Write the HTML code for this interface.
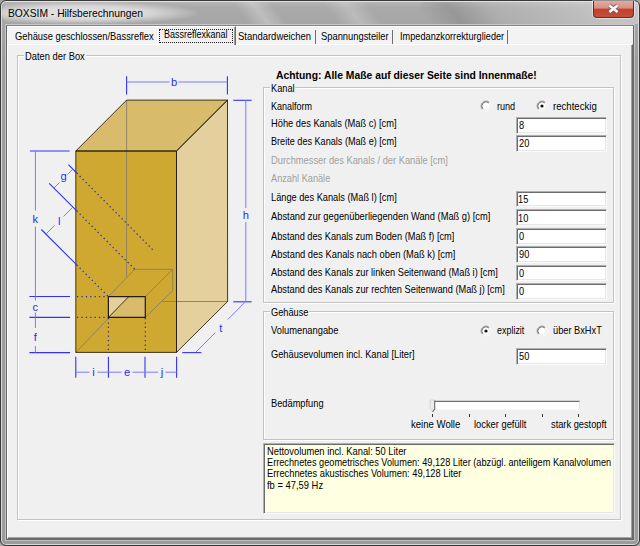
<!DOCTYPE html>
<html lang="de"><head><meta charset="utf-8"><title>BOXSIM - Hilfsberechnungen</title>
<style>
html,body{margin:0;padding:0;}
body{width:640px;height:546px;overflow:hidden;position:relative;background:#a4a4a4;font-family:"Liberation Sans",sans-serif;color:#000;}
.abs,.t,.grp,.inp,.glbl,#frame,#client,#page,#seltab,#focus,#close,#track,#tglow,.streak{position:absolute;box-sizing:border-box;}
.t{white-space:pre;line-height:14px;transform-origin:0 50%;display:block;}
.b{font-weight:bold;}
.title{color:#000;}
#frame{left:0;top:0;width:640px;height:546px;border:1px solid #383838;border-radius:6px;
 background:linear-gradient(180deg,#b6b6b6 0,#a9a9a9 7px,#a6a6a6 24px,#9c9c9c 60px,#9c9c9c 100%);
 box-shadow:inset 0 0 0 1px rgba(255,255,255,.62);}
#tglow{left:2px;top:2px;width:195px;height:22px;border-radius:10px;background:radial-gradient(ellipse at 40% 50%,rgba(255,255,255,.72) 0,rgba(255,255,255,.55) 42%,rgba(255,255,255,0) 74%);}
#streak1{left:225px;top:2px;width:70px;height:22px;background:linear-gradient(52deg,rgba(255,255,255,0) 28%,rgba(255,255,255,.26) 50%,rgba(255,255,255,0) 72%);}
#streak2{left:315px;top:2px;width:75px;height:22px;background:linear-gradient(52deg,rgba(255,255,255,0) 26%,rgba(255,255,255,.22) 50%,rgba(255,255,255,0) 74%);}
#streak3{left:420px;top:2px;width:218px;height:22px;background:linear-gradient(52deg,rgba(0,0,0,0) 4%,rgba(0,0,0,.10) 18%,rgba(255,255,255,.08) 36%,rgba(255,255,255,.20) 62%,rgba(255,255,255,.30) 80%,rgba(255,255,255,.34) 100%);}
#close{left:592.5px;top:0.5px;width:41px;height:17px;border:1px solid #55322c;border-top:none;border-radius:0 0 4px 4px;
 background:linear-gradient(180deg,#e2ab9f 0,#d88f80 45%,#c1402b 50%,#c4503a 100%);box-shadow:0 0 0 1px rgba(255,255,255,.45);}
#close svg{position:absolute;left:13px;top:2px;}
#client{left:6px;top:25px;width:628px;height:515px;background:#f0f0f0;border:1px solid #666;border-top-color:#858585;box-shadow:0 0 0 1px rgba(255,255,255,.38), inset 1px 1px 0 #fbfbfb;}
#page{left:7px;top:44px;width:626px;height:495px;background:#f0f0f0;border-top:1px solid #fff;border-left:1px solid #fff;border-right:1px solid #6b6b6b;border-bottom:1px solid #6b6b6b;box-shadow:inset -1px -1px 0 #a2a2a2;}
#seltab{left:156.5px;top:26px;width:79px;height:19px;background:#f0f0f0;border-left:1px solid #fff;border-top:1px solid #fff;border-right:1px solid #696969;box-shadow:inset -1px 0 0 #a0a0a0;}
#focus{left:159px;top:28.8px;width:74px;height:14px;border:1px dotted #222;}
.grp{border:1px solid #c3c3c3;box-shadow:1px 1px 0 #fff, inset 1px 1px 0 #fff;}
.glbl{background:#f0f0f0;}
.inp{border-top:1px solid #b0b0b0;border-left:1px solid #b0b0b0;border-right:1px solid #fbfbfb;border-bottom:1px solid #fbfbfb;box-shadow:inset 1px 1px 0 #6c6c6c, inset -1px -1px 0 #e6e6e6;}
#track{left:434.2px;top:401px;width:146px;height:9px;background:#fff;border-top:1px solid #6e6e6e;border-left:1px solid #7a7a7a;border-right:1px solid #e8e8e8;border-bottom:1px solid #f6f6f6;box-shadow:0 -1px 0 rgba(120,120,120,.25);}

</style></head>
<body>
<div id="frame"></div>
<div id="tglow"></div>
<div id="streak1" class="streak"></div><div id="streak2" class="streak"></div><div id="streak3" class="streak"></div>
<div id="close"><svg width="14" height="12" viewBox="0 0 14 12"><path d="M2.4 2.5 L10.6 8.9 M10.6 2.5 L2.4 8.9" stroke="#75606a" stroke-width="4.2" stroke-linecap="butt"/><path d="M2.4 2.5 L10.6 8.9 M10.6 2.5 L2.4 8.9" stroke="#fdfdfd" stroke-width="2.5"/></svg></div>
<span class="t title" style="left:7.90px;top:6px;font-size:11.2px;transform:scaleX(0.9190);">BOXSIM - Hilfsberechnungen</span>
<div id="client"></div>
<div class="abs" style="left:8.00px;top:27.00px;width:625.00px;height:17.00px;background:#f3f3f3;"></div>
<div id="page"></div>
<div id="seltab"></div>
<div id="focus"></div>
<span class="t" style="left:14.60px;top:29px;font-size:10.6px;transform:scaleX(0.8822);">Gehäuse geschlossen/Bassreflex</span>
<span class="t" style="left:164.00px;top:27px;font-size:10.6px;transform:scaleX(0.8507);">Bassreflexkanal</span>
<span class="t" style="left:238.11px;top:29px;font-size:10.6px;transform:scaleX(0.8926);">Standardweichen</span>
<span class="t" style="left:321.32px;top:29px;font-size:10.6px;transform:scaleX(0.8827);">Spannungsteiler</span>
<span class="t" style="left:399.70px;top:29px;font-size:10.6px;transform:scaleX(0.8672);">Impedanzkorrekturglieder</span>
<div class="abs" style="left:314.60px;top:29.50px;width:1.70px;height:14.30px;background:linear-gradient(90deg,#6e6e6e 0 55%,#a8a8a8 55%);"></div>
<div class="abs" style="left:391.70px;top:29.50px;width:1.70px;height:14.30px;background:linear-gradient(90deg,#6e6e6e 0 55%,#a8a8a8 55%);"></div>
<div class="abs" style="left:506.80px;top:29.50px;width:1.70px;height:14.30px;background:linear-gradient(90deg,#6e6e6e 0 55%,#a8a8a8 55%);"></div>
<div class="grp" style="left:17.00px;top:55.00px;width:604.00px;height:465.00px;"></div>
<span class="glbl" style="left:24px;top:50px;width:62px;height:12px"></span>
<span class="t" style="left:25.00px;top:49px;font-size:10.6px;transform:scaleX(0.8824);">Daten der Box</span>
<div class="grp" style="left:263.00px;top:87.00px;width:351.00px;height:216.00px;"></div>
<span class="glbl" style="left:269.5px;top:81px;width:25.5px;height:12px"></span>
<span class="t" style="left:270.50px;top:81px;font-size:10.6px;transform:scaleX(0.8704);">Kanal</span>
<div class="grp" style="left:263.00px;top:311.00px;width:351.00px;height:129.00px;"></div>
<span class="glbl" style="left:269.5px;top:305px;width:39.5px;height:12px"></span>
<span class="t" style="left:270.50px;top:305px;font-size:10.6px;transform:scaleX(0.8721);">Gehäuse</span>
<span class="t b" style="left:276.02px;top:68px;font-size:10.6px;transform:scaleX(0.9774);">Achtung: Alle Maße auf dieser Seite sind Innenmaße!</span>
<span class="t" style="left:270.50px;top:99px;font-size:10.6px;transform:scaleX(0.8521);">Kanalform</span>
<span class="t" style="left:270.50px;top:116px;font-size:10.6px;transform:scaleX(0.8776);">Höhe des Kanals (Maß c) [cm]</span>
<div class="inp" style="left:515.70px;top:117.00px;width:91.40px;height:16.80px;background:#fff"></div>
<span class="t" style="left:519.00px;top:118px;font-size:10.6px;transform:scaleX(0.8720);">8</span>
<span class="t" style="left:270.50px;top:134px;font-size:10.6px;transform:scaleX(0.8596);">Breite des Kanals (Maß e) [cm]</span>
<div class="inp" style="left:515.70px;top:135.00px;width:91.40px;height:16.80px;background:#fff"></div>
<span class="t" style="left:519.00px;top:136px;font-size:10.6px;transform:scaleX(0.8720);">20</span>
<span class="t" style="left:270.50px;top:153px;font-size:10.6px;transform:scaleX(0.8781);color:#a0a0a0;">Durchmesser des Kanals / der Kanäle [cm]</span>
<span class="t" style="left:270.50px;top:171px;font-size:10.6px;transform:scaleX(0.8676);color:#a0a0a0;">Anzahl Kanäle</span>
<span class="t" style="left:270.50px;top:190px;font-size:10.6px;transform:scaleX(0.8715);">Länge des Kanals (Maß l) [cm]</span>
<div class="inp" style="left:515.70px;top:190.50px;width:91.40px;height:16.80px;background:#fff"></div>
<span class="t" style="left:518.13px;top:192px;font-size:10.6px;transform:scaleX(0.8720);">15</span>
<span class="t" style="left:270.50px;top:209px;font-size:10.6px;transform:scaleX(0.8799);">Abstand zur gegenüberliegenden Wand (Maß g) [cm]</span>
<div class="inp" style="left:515.70px;top:209.20px;width:91.40px;height:16.80px;background:#fff"></div>
<span class="t" style="left:518.13px;top:211px;font-size:10.6px;transform:scaleX(0.8720);">10</span>
<span class="t" style="left:270.50px;top:229px;font-size:10.6px;transform:scaleX(0.8697);">Abstand des Kanals zum Boden (Maß f) [cm]</span>
<div class="inp" style="left:515.70px;top:227.90px;width:91.40px;height:16.80px;background:#fff"></div>
<span class="t" style="left:519.00px;top:229px;font-size:10.6px;transform:scaleX(0.8720);">0</span>
<span class="t" style="left:270.50px;top:247px;font-size:10.6px;transform:scaleX(0.8818);">Abstand des Kanals nach oben (Maß k) [cm]</span>
<div class="inp" style="left:515.70px;top:246.10px;width:91.40px;height:16.80px;background:#fff"></div>
<span class="t" style="left:519.00px;top:247px;font-size:10.6px;transform:scaleX(0.8720);">90</span>
<span class="t" style="left:270.50px;top:265px;font-size:10.6px;transform:scaleX(0.8712);">Abstand des Kanals zur linken Seitenwand (Maß i) [cm]</span>
<div class="inp" style="left:515.70px;top:264.60px;width:91.40px;height:16.80px;background:#fff"></div>
<span class="t" style="left:519.00px;top:266px;font-size:10.6px;transform:scaleX(0.8720);">0</span>
<span class="t" style="left:270.50px;top:282px;font-size:10.6px;transform:scaleX(0.8724);">Abstand des Kanals zur rechten Seitenwand (Maß j) [cm]</span>
<div class="inp" style="left:515.70px;top:282.80px;width:91.40px;height:16.80px;background:#fff"></div>
<span class="t" style="left:519.00px;top:284px;font-size:10.6px;transform:scaleX(0.8720);">0</span>
<svg class="abs" style="left:477.60px;top:98.30px" width="16" height="16" viewBox="-8 -8 16 16"><circle r="4.2" fill="#fff"/><path d="M -3.5 3.5 A 4.95 4.95 0 0 1 3.5 -3.5" fill="none" stroke="#9a9a9a" stroke-width="1"/><path d="M -2.9 2.9 A 4.1 4.1 0 0 1 2.9 -2.9" fill="none" stroke="#6a6a6a" stroke-width="0.9"/><path d="M 3.5 -3.5 A 4.95 4.95 0 0 1 -3.5 3.5" fill="none" stroke="#fff" stroke-width="1"/><path d="M 2.9 -2.9 A 4.1 4.1 0 0 1 -2.9 2.9" fill="none" stroke="#e8e8e8" stroke-width="0.9"/></svg>
<span class="t" style="left:497.00px;top:99px;font-size:10.6px;transform:scaleX(0.8571);">rund</span>
<svg class="abs" style="left:534.30px;top:98.30px" width="16" height="16" viewBox="-8 -8 16 16"><circle r="4.2" fill="#fff"/><path d="M -3.5 3.5 A 4.95 4.95 0 0 1 3.5 -3.5" fill="none" stroke="#9a9a9a" stroke-width="1"/><path d="M -2.9 2.9 A 4.1 4.1 0 0 1 2.9 -2.9" fill="none" stroke="#6a6a6a" stroke-width="0.9"/><path d="M 3.5 -3.5 A 4.95 4.95 0 0 1 -3.5 3.5" fill="none" stroke="#fff" stroke-width="1"/><path d="M 2.9 -2.9 A 4.1 4.1 0 0 1 -2.9 2.9" fill="none" stroke="#e8e8e8" stroke-width="0.9"/><circle r="1.6" fill="#111"/></svg>
<span class="t" style="left:552.80px;top:99px;font-size:10.6px;transform:scaleX(0.9062);">rechteckig</span>
<span class="t" style="left:270.50px;top:323px;font-size:10.6px;transform:scaleX(0.8816);">Volumenangabe</span>
<svg class="abs" style="left:478.00px;top:323.40px" width="16" height="16" viewBox="-8 -8 16 16"><circle r="4.2" fill="#fff"/><path d="M -3.5 3.5 A 4.95 4.95 0 0 1 3.5 -3.5" fill="none" stroke="#9a9a9a" stroke-width="1"/><path d="M -2.9 2.9 A 4.1 4.1 0 0 1 2.9 -2.9" fill="none" stroke="#6a6a6a" stroke-width="0.9"/><path d="M 3.5 -3.5 A 4.95 4.95 0 0 1 -3.5 3.5" fill="none" stroke="#fff" stroke-width="1"/><path d="M 2.9 -2.9 A 4.1 4.1 0 0 1 -2.9 2.9" fill="none" stroke="#e8e8e8" stroke-width="0.9"/><circle r="1.6" fill="#111"/></svg>
<span class="t" style="left:496.80px;top:323px;font-size:10.6px;transform:scaleX(0.8437);">explizit</span>
<svg class="abs" style="left:534.30px;top:323.40px" width="16" height="16" viewBox="-8 -8 16 16"><circle r="4.2" fill="#fff"/><path d="M -3.5 3.5 A 4.95 4.95 0 0 1 3.5 -3.5" fill="none" stroke="#9a9a9a" stroke-width="1"/><path d="M -2.9 2.9 A 4.1 4.1 0 0 1 2.9 -2.9" fill="none" stroke="#6a6a6a" stroke-width="0.9"/><path d="M 3.5 -3.5 A 4.95 4.95 0 0 1 -3.5 3.5" fill="none" stroke="#fff" stroke-width="1"/><path d="M 2.9 -2.9 A 4.1 4.1 0 0 1 -2.9 2.9" fill="none" stroke="#e8e8e8" stroke-width="0.9"/></svg>
<span class="t" style="left:552.50px;top:323px;font-size:10.6px;transform:scaleX(0.8727);">über BxHxT</span>
<span class="t" style="left:270.50px;top:347px;font-size:10.6px;transform:scaleX(0.8738);">Gehäusevolumen incl. Kanal [Liter]</span>
<div class="inp" style="left:515.70px;top:348.20px;width:91.40px;height:17.00px;background:#fff"></div>
<span class="t" style="left:519.00px;top:349px;font-size:10.6px;transform:scaleX(0.8720);">50</span>
<span class="t" style="left:270.50px;top:396px;font-size:10.6px;transform:scaleX(0.8750);">Bedämpfung</span>
<div id="track"></div>
<svg class="abs" style="left:428px;top:398px" width="10" height="16" viewBox="0 0 10 16"><path d="M2.2 2 H6.6 V10.5 L4.4 13.6 L2.2 10.5 Z" fill="#ececec" stroke="#d0d0d0" stroke-width="0.8"/><path d="M6.7 2.5 V11 L4.6 13.8" fill="none" stroke="#707070" stroke-width="1.1"/></svg>
<div class="abs" style="left:431.70px;top:414.00px;width:1.20px;height:3.20px;background:#333;"></div>
<div class="abs" style="left:468.80px;top:414.00px;width:1.20px;height:3.20px;background:#333;"></div>
<div class="abs" style="left:504.80px;top:414.00px;width:1.20px;height:3.20px;background:#333;"></div>
<div class="abs" style="left:541.60px;top:414.00px;width:1.20px;height:3.20px;background:#333;"></div>
<div class="abs" style="left:577.60px;top:414.00px;width:1.20px;height:3.20px;background:#333;"></div>
<span class="t" style="left:410.90px;top:417px;font-size:10.6px;transform:scaleX(0.9037);">keine Wolle</span>
<span class="t" style="left:474.00px;top:417px;font-size:10.6px;transform:scaleX(0.8797);">locker gefüllt</span>
<span class="t" style="left:551.00px;top:417px;font-size:10.6px;transform:scaleX(0.8750);">stark gestopft</span>
<div class="inp" style="left:263.3px;top:443.4px;width:351.4px;height:70.8px;background:#ffffe1"></div>
<div class="abs" style="left:265.5px;top:445px;width:346.5px;height:68.5px;overflow:hidden">
<span class="t" style="left:1.70px;top:-1px;font-size:10.6px;transform:scaleX(0.8804);">Nettovolumen incl. Kanal: 50 Liter</span>
<span class="t" style="left:1.70px;top:10px;font-size:10.6px;transform:scaleX(0.8670);">Errechnetes geometrisches Volumen: 49,128 Liter (abzügl. anteiligem Kanalvolumen</span>
<span class="t" style="left:1.70px;top:21px;font-size:10.6px;transform:scaleX(0.8778);">Errechnetes akustisches Volumen: 49,128 Liter</span>
<span class="t" style="left:1.70px;top:33px;font-size:10.6px;transform:scaleX(0.8857);">fb = 47,59 Hz</span>
</div>
<svg class="abs" style="left:0;top:0" width="262" height="400" viewBox="0 0 262 400" font-family="Liberation Sans, sans-serif" font-size="11.2">
<polygon points="75.8,151.0 176.5,151.0 176.5,352.4 75.8,352.4" fill="#cfa832"/>
<polygon points="75.8,151.0 126.6,100.1 227.5,100.1 176.5,151.0" fill="#d9bb6c"/>
<polygon points="176.5,151.0 227.5,100.1 227.6,301.5 176.5,352.4" fill="#e4d09c"/>
<line x1="126.6" y1="100.1" x2="126.6" y2="277.6" stroke="#8f8464" stroke-width="1"/>
<line x1="75.8" y1="352.4" x2="108.4" y2="318.4" stroke="#8f8464" stroke-width="1"/>
<line x1="161.5" y1="301.5" x2="227.6" y2="301.5" stroke="#8f8464" stroke-width="1"/>
<line x1="108.4" y1="296.6" x2="134.7" y2="269.3" stroke="#8f8464" stroke-width="1"/>
<line x1="134.7" y1="269.3" x2="172.7" y2="269.3" stroke="#8f8464" stroke-width="1"/>
<line x1="145.3" y1="296.6" x2="172.7" y2="269.3" stroke="#8f8464" stroke-width="1"/>
<line x1="172.7" y1="269.3" x2="172.7" y2="290.7" stroke="#8f8464" stroke-width="1"/>
<line x1="145.3" y1="317.4" x2="172.7" y2="290.7" stroke="#8f8464" stroke-width="1"/>
<polygon points="108.4,296.6 145.3,296.6 145.3,317.4 108.4,317.4" fill="#d9bb6c"/>
<polygon points="108.4,296.6 128.8,296.6 108.4,317.4" fill="#e4d09c"/>
<line x1="76.7" y1="173" x2="153" y2="250" stroke="#2e2e98" stroke-width="1.25" stroke-dasharray="1.3 2.96"/>
<line x1="76.7" y1="210.8" x2="134.7" y2="269.3" stroke="#2e2e98" stroke-width="1.25" stroke-dasharray="1.3 2.96"/>
<line x1="76.7" y1="264.9" x2="108.4" y2="296.6" stroke="#2e2e98" stroke-width="1.25" stroke-dasharray="1.3 2.96"/>
<line x1="77" y1="296.6" x2="108.4" y2="296.6" stroke="#2e2e98" stroke-width="1.25" stroke-dasharray="1.25 3.15"/>
<line x1="77" y1="317.4" x2="108.4" y2="317.4" stroke="#2e2e98" stroke-width="1.25" stroke-dasharray="1.25 3.15"/>
<line x1="108.4" y1="318" x2="108.4" y2="352" stroke="#2e2e98" stroke-width="1.25" stroke-dasharray="1.25 3.15"/>
<line x1="145.3" y1="318" x2="145.3" y2="352" stroke="#2e2e98" stroke-width="1.25" stroke-dasharray="1.25 3.15"/>
<polygon points="75.8,151.0 176.5,151.0 176.5,352.4 75.8,352.4" fill="none" stroke="#221a0a" stroke-width="0.85"/>
<polygon points="75.8,151.0 126.6,100.1 227.5,100.1 176.5,151.0" fill="none" stroke="#221a0a" stroke-width="0.85"/>
<polygon points="176.5,151.0 227.5,100.1 227.6,301.5 176.5,352.4" fill="none" stroke="#221a0a" stroke-width="0.85"/>
<polygon points="108.4,296.6 145.3,296.6 145.3,317.4 108.4,317.4" fill="none" stroke="#221a0a" stroke-width="1.2"/>
<line x1="108.4" y1="317.4" x2="128.8" y2="296.6" stroke="#221a0a" stroke-width="0.85"/>
<line x1="126.6" y1="76.3" x2="126.6" y2="94.4" stroke="#3030ff" stroke-width="1.1"/>
<line x1="227.4" y1="76.3" x2="227.4" y2="94.4" stroke="#3030ff" stroke-width="1.1"/>
<line x1="126.6" y1="82" x2="169.6" y2="82" stroke="#7a7aff" stroke-width="1.0"/>
<line x1="178.4" y1="82" x2="227.4" y2="82" stroke="#7a7aff" stroke-width="1.0"/>
<line x1="233.3" y1="100.3" x2="251.6" y2="100.3" stroke="#3030ff" stroke-width="1.1"/>
<line x1="233.3" y1="301.8" x2="251.6" y2="301.8" stroke="#3030ff" stroke-width="1.1"/>
<line x1="245.8" y1="100.3" x2="245.8" y2="208" stroke="#7a7aff" stroke-width="1.0"/>
<line x1="245.8" y1="222" x2="245.8" y2="301.8" stroke="#7a7aff" stroke-width="1.0"/>
<line x1="244.8" y1="302.4" x2="227.8" y2="319.5" stroke="#7a7aff" stroke-width="1.0"/>
<line x1="215.3" y1="332.6" x2="195.5" y2="352.4" stroke="#7a7aff" stroke-width="1.0"/>
<line x1="182.3" y1="352.6" x2="201.4" y2="352.6" stroke="#3030ff" stroke-width="1.1"/>
<line x1="29.9" y1="151" x2="69.6" y2="151" stroke="#3030ff" stroke-width="1.1"/>
<line x1="29.4" y1="296.5" x2="70.1" y2="296.5" stroke="#3030ff" stroke-width="1.1"/>
<line x1="29.4" y1="317.4" x2="70.1" y2="317.4" stroke="#3030ff" stroke-width="1.1"/>
<line x1="29.4" y1="352.6" x2="70.1" y2="352.6" stroke="#3030ff" stroke-width="1.1"/>
<line x1="35.4" y1="151" x2="35.4" y2="210.5" stroke="#7a7aff" stroke-width="1.0"/>
<line x1="35.4" y1="226.5" x2="35.4" y2="296.5" stroke="#7a7aff" stroke-width="1.0"/>
<line x1="35.4" y1="296.5" x2="35.4" y2="300.5" stroke="#7a7aff" stroke-width="1.0"/>
<line x1="35.4" y1="312.5" x2="35.4" y2="317.4" stroke="#7a7aff" stroke-width="1.0"/>
<line x1="35.4" y1="317.4" x2="35.4" y2="328" stroke="#7a7aff" stroke-width="1.0"/>
<line x1="35.4" y1="346" x2="35.4" y2="352.6" stroke="#7a7aff" stroke-width="1.0"/>
<line x1="68.4" y1="164.6" x2="76.7" y2="173" stroke="#3030ff" stroke-width="1.1"/>
<line x1="49.2" y1="183.3" x2="76.7" y2="210.8" stroke="#3030ff" stroke-width="1.1"/>
<line x1="41.3" y1="229.5" x2="76.7" y2="264.9" stroke="#3030ff" stroke-width="1.1"/>
<line x1="72.9" y1="169.1" x2="67.5" y2="174.5" stroke="#7a7aff" stroke-width="1.0"/>
<line x1="59.5" y1="182.5" x2="54" y2="188" stroke="#7a7aff" stroke-width="1.0"/>
<line x1="72.9" y1="207.1" x2="63.5" y2="216.5" stroke="#7a7aff" stroke-width="1.0"/>
<line x1="54.5" y1="225.5" x2="45.9" y2="234.1" stroke="#7a7aff" stroke-width="1.0"/>
<line x1="75.8" y1="356.8" x2="75.8" y2="377.7" stroke="#3030ff" stroke-width="1.1"/>
<line x1="108.4" y1="356.8" x2="108.4" y2="377.7" stroke="#3030ff" stroke-width="1.1"/>
<line x1="145.0" y1="356.8" x2="145.0" y2="377.7" stroke="#3030ff" stroke-width="1.1"/>
<line x1="176.6" y1="356.8" x2="176.6" y2="377.7" stroke="#3030ff" stroke-width="1.1"/>
<line x1="75.8" y1="372.2" x2="89.5" y2="372.2" stroke="#7a7aff" stroke-width="1.0"/>
<line x1="97.5" y1="372.2" x2="108.4" y2="372.2" stroke="#7a7aff" stroke-width="1.0"/>
<line x1="108.4" y1="372.2" x2="121.5" y2="372.2" stroke="#7a7aff" stroke-width="1.0"/>
<line x1="132.5" y1="372.2" x2="145" y2="372.2" stroke="#7a7aff" stroke-width="1.0"/>
<line x1="145" y1="372.2" x2="158" y2="372.2" stroke="#7a7aff" stroke-width="1.0"/>
<line x1="165.5" y1="372.2" x2="176.6" y2="372.2" stroke="#7a7aff" stroke-width="1.0"/>
<text x="174" y="85.6" fill="#2a2aff" text-anchor="middle">b</text>
<text x="245.8" y="219.4" fill="#2a2aff" text-anchor="middle">h</text>
<text x="35.2" y="222.5" fill="#2a2aff" text-anchor="middle">k</text>
<text x="63.6" y="180.2" fill="#2a2aff" text-anchor="middle">g</text>
<text x="59.2" y="225" fill="#2a2aff" text-anchor="middle">l</text>
<text x="35.2" y="310.6" fill="#2a2aff" text-anchor="middle">c</text>
<text x="35.4" y="341" fill="#2a2aff" text-anchor="middle">f</text>
<text x="93.6" y="375.6" fill="#2a2aff" text-anchor="middle">i</text>
<text x="127" y="375.6" fill="#2a2aff" text-anchor="middle">e</text>
<text x="162" y="375.6" fill="#2a2aff" text-anchor="middle">j</text>
<text x="220.8" y="331.6" fill="#2a2aff" text-anchor="middle">t</text>
</svg>
</body></html>
